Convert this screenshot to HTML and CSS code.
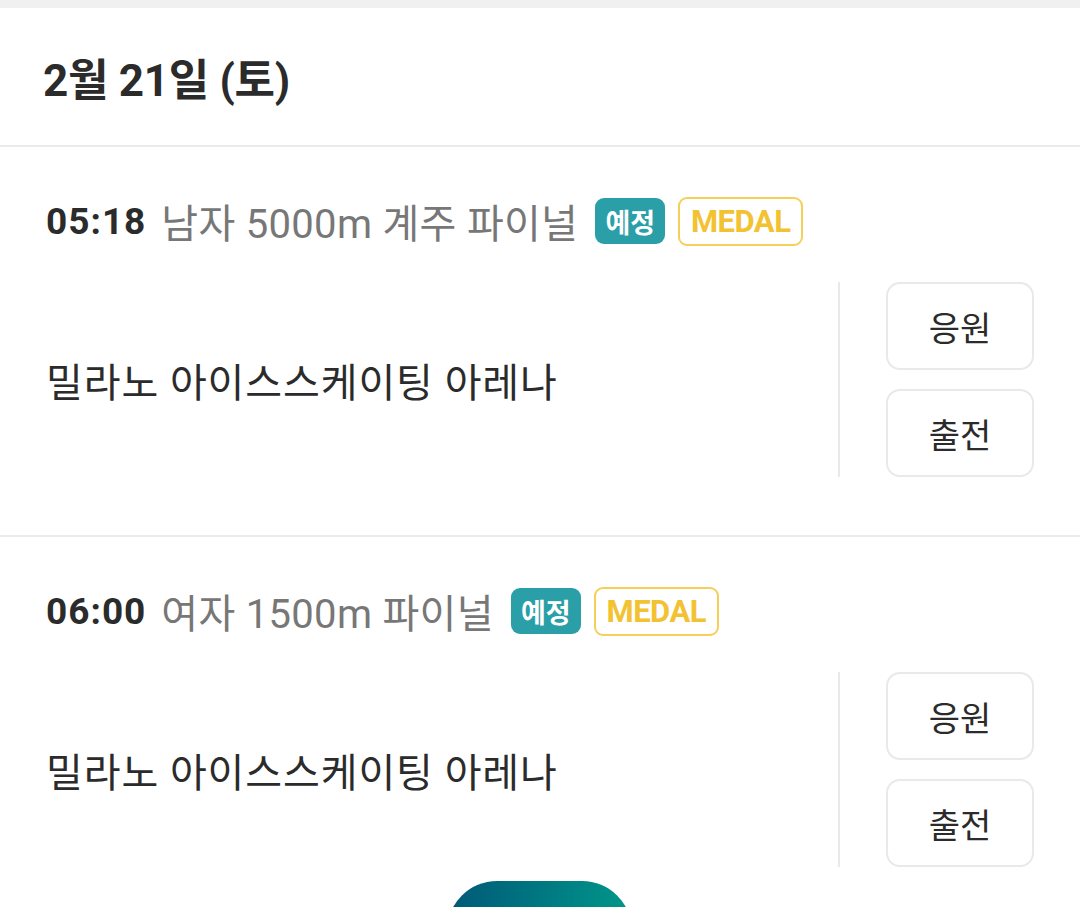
FILE: index.html
```html
<!DOCTYPE html>
<html lang="ko">
<head>
<meta charset="utf-8">
<link rel="stylesheet" href="styles.css">
</head>
<body>
<div class="page">
  <div class="topbar"></div>
  <header class="day-header">
    <h1 class="day-title">2월 21일 (토)</h1>
  </header>

  <section class="event">
    <div class="event-head">
      <span class="time">05:18</span>
      <span class="name">남자 5000m 계주 파이널</span>
      <span class="badge badge-status">예정</span>
      <span class="badge badge-medal">MEDAL</span>
    </div>
    <div class="event-body">
      <div class="venue">밀라노 아이스스케이팅 아레나</div>
      <div class="actions">
        <button class="action">응원</button>
        <button class="action">출전</button>
      </div>
    </div>
  </section>

  <section class="event">
    <div class="event-head">
      <span class="time">06:00</span>
      <span class="name">여자 1500m 파이널</span>
      <span class="badge badge-status">예정</span>
      <span class="badge badge-medal">MEDAL</span>
    </div>
    <div class="event-body">
      <div class="venue">밀라노 아이스스케이팅 아레나</div>
      <div class="actions">
        <button class="action">응원</button>
        <button class="action">출전</button>
      </div>
    </div>
  </section>

  <div class="fab"></div>
</div>
</body>
</html>
```

FILE: styles.css
```css
* { box-sizing: border-box; margin: 0; padding: 0; }
html, body { background: #ffffff; }
body {
  font-family: Roboto, "Noto Sans CJK KR", sans-serif;
  color: #2b2b2b;
  width: 1080px;
  height: 907px;
  overflow: hidden;
}
.page { position: relative; width: 1080px; height: 907px; overflow: hidden; }
.topbar { height: 8px; background: #f0f0f0; }
.day-header {
  height: 139px;
  display: flex;
  align-items: center;
  padding-left: 43px;
  border-bottom: 2px solid #ebebeb;
}
.day-title {
  font-size: 44px;
  font-weight: 700;
  color: #2b2b2b;
  letter-spacing: -0.3px;
}
.event {
  padding: 49px 46px 58px 46px;
  border-bottom: 2px solid #ebebeb;
}
.event-head {
  display: flex;
  align-items: center;
  height: 50px;
}
.time {
  font-size: 37px;
  font-weight: 700;
  color: #2b2b2b;
  letter-spacing: 1px;
  margin-right: 15px;
}
.name {
  font-size: 40px;
  color: #777777;
  letter-spacing: 0.3px;
  margin-right: 17px;
}
.badge {
  display: inline-flex;
  align-items: center;
  justify-content: center;
  font-weight: 700;
  border-radius: 9px;
}
.badge-status {
  background: #2a9fa8;
  color: #ffffff;
  width: 70px;
  height: 46px;
  font-size: 27px;
  margin-right: 13px;
}
.badge-medal {
  border: 2.5px solid #f5cf57;
  color: #f3c232;
  width: 125px;
  height: 49px;
  font-size: 31px;
  letter-spacing: -0.5px;
}
.event-body {
  margin-top: 36px;
  display: flex;
  align-items: center;
  height: 195px;
}
.venue {
  flex: 1;
  font-size: 40px;
  color: #2b2b2b;
  letter-spacing: 0.9px;
}
.actions {
  border-left: 2px solid #e9e9e9;
  height: 195px;
  padding-left: 46px;
  display: flex;
  flex-direction: column;
  justify-content: space-between;
}
.action {
  width: 148px;
  height: 88px;
  background: #ffffff;
  border: 2px solid #e9e9e9;
  border-radius: 14px;
  font-family: Roboto, "Noto Sans CJK KR", sans-serif;
  font-size: 34px;
  color: #2b2b2b;
}
.fab {
  position: absolute;
  left: 447px;
  top: 881px;
  width: 185px;
  height: 100px;
  border-radius: 50px;
  background: linear-gradient(90deg, #005877, #00978b);
}
```
